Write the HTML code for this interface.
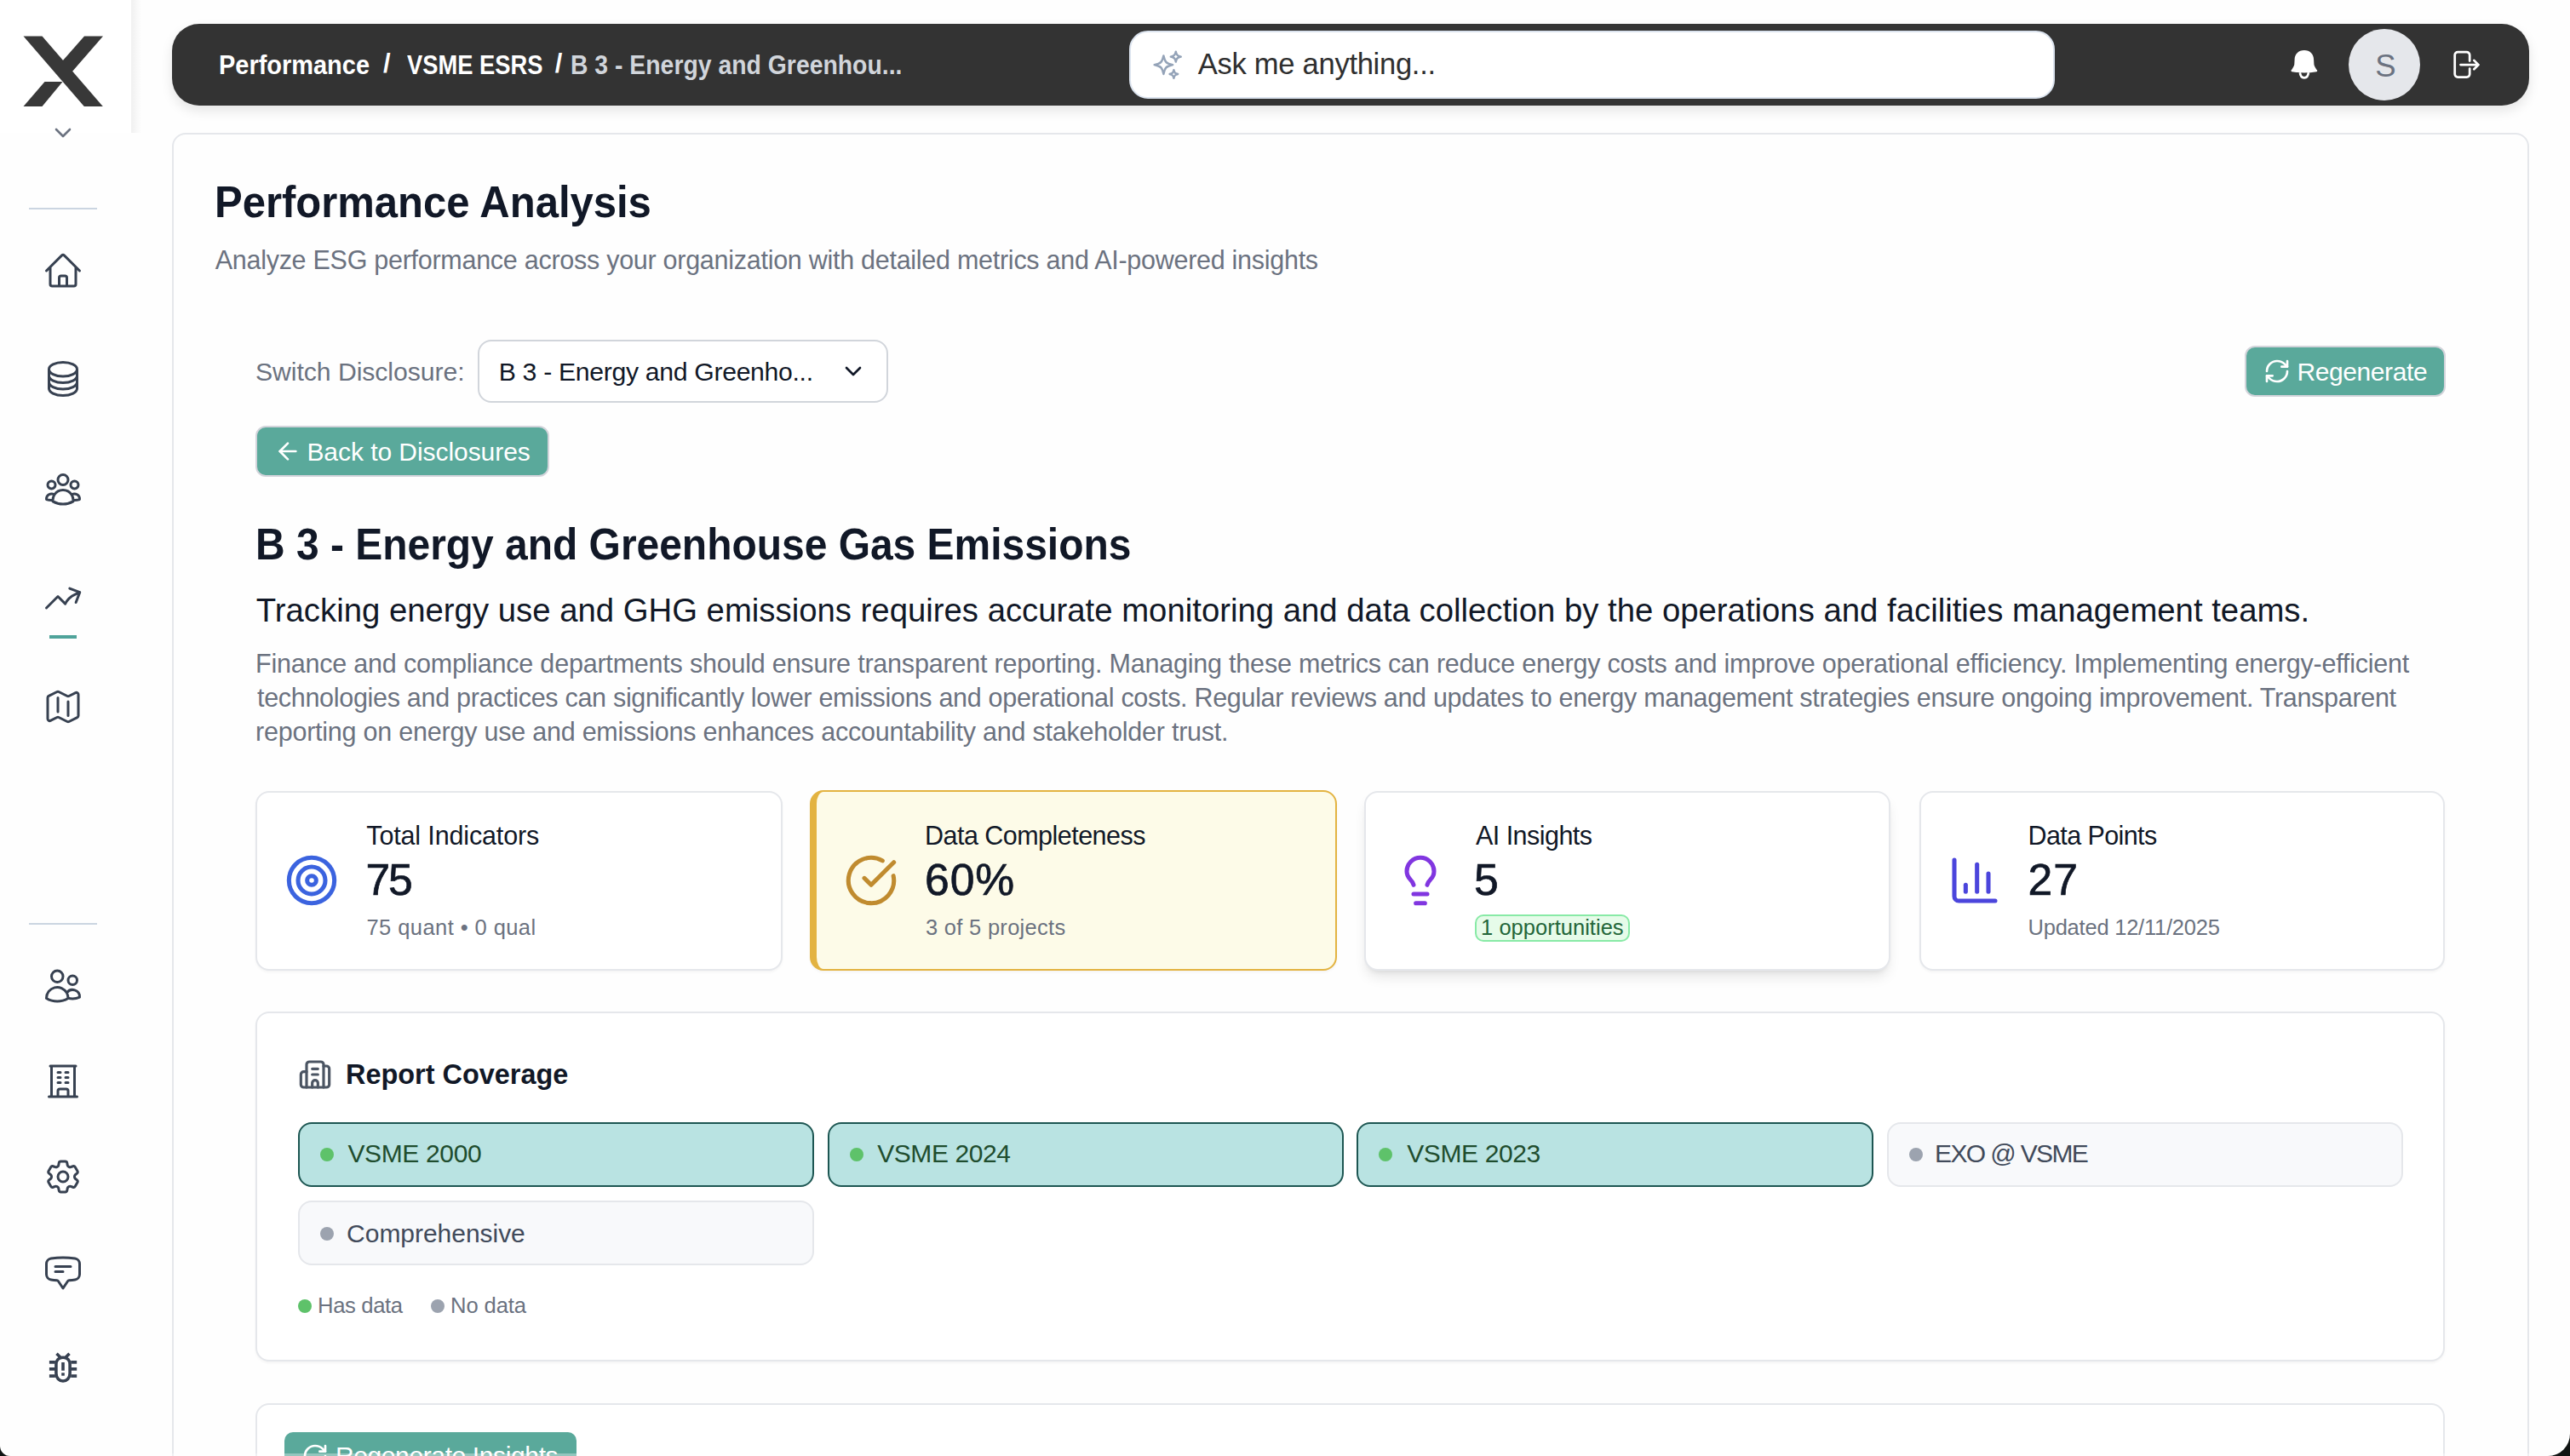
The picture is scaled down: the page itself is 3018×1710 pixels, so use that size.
<!DOCTYPE html>
<html><head><meta charset="utf-8">
<style>
html,body{margin:0;padding:0;}
html{background:#101413;}
body{width:3018px;height:1710px;position:relative;overflow:hidden;background:#fefefe;border-radius:0 0 26px 12px;font-family:"Liberation Sans",sans-serif;}
.a{position:absolute;}
.t{position:absolute;line-height:1;white-space:nowrap;}
.b{font-weight:bold;}
svg{position:absolute;overflow:visible;}
@media (max-width: 2000px){html{zoom:0.5;}}
</style></head>
<body>
<!-- sidebar top logo block -->
<div class="a" style="left:0;top:0;width:154px;height:156px;background:#ffffff;"></div>
<div class="a" style="left:154px;top:0;width:12px;height:156px;background:linear-gradient(to right, rgba(0,0,0,0.055), rgba(0,0,0,0));"></div>
<svg style="left:0;top:0" width="160" height="160" viewBox="0 0 160 160">
  <polygon fill="#383838" points="27.5,42.6 49.5,42.6 120.8,125 98.8,125"/>
  <polygon fill="#383838" points="99,42.6 121,42.6 84,85 73,72"/>
  <polygon fill="#383838" points="52.5,96 73.5,96 49.5,125 27.5,125"/>
  <polyline fill="none" stroke="#6b7280" stroke-width="2.6" stroke-linecap="round" stroke-linejoin="round" points="66,152 74,160 82,152"/>
</svg>

<!-- sidebar separator & icons -->
<div class="a" style="left:34px;top:243.5px;width:80px;height:2px;background:#cbd5e1;"></div>
<div class="a" style="left:34px;top:1083.5px;width:80px;height:2px;background:#cbd5e1;"></div>
<div class="a" style="left:58px;top:746px;width:32px;height:4px;background:#4fa39a;"></div>

<!-- top bar -->
<div class="a" style="left:202px;top:28px;width:2768px;height:96px;background:#333333;border-radius:32px;box-shadow:0 6px 14px rgba(0,0,0,0.10);"></div>
<div class="t b" id="bc1" style="left:256.90px;top:61.52px;font-size:30.8px;color:#ffffff;letter-spacing:0px;transform:scaleX(0.9401);transform-origin:0 0;">Performance</div>
<div class="t b" id="bc2" style="left:449.90px;top:60.12px;font-size:30.8px;color:#ffffff;letter-spacing:0.000px;">/</div>
<div class="t b" id="bc3" style="left:477.60px;top:61.52px;font-size:30.8px;color:#ffffff;letter-spacing:0px;transform:scaleX(0.8868);transform-origin:0 0;">VSME ESRS</div>
<div class="t b" id="bc4" style="left:651.80px;top:60.12px;font-size:30.8px;color:#ffffff;letter-spacing:0.000px;">/</div>
<div class="t b" id="bc5" style="left:670.40px;top:61.52px;font-size:30.8px;color:#d1d5db;letter-spacing:0px;transform:scaleX(0.9213);transform-origin:0 0;">B 3 - Energy and Greenhou...</div>
<!-- search -->
<div class="a" style="left:1326px;top:36px;width:1087px;height:80px;box-sizing:border-box;background:#fff;border:2px solid #dbe3ee;border-radius:22px;"></div>
<div class="t" id="search" style="left:1406.80px;top:57.70px;font-size:34.6px;color:#2f2f2f;letter-spacing:-0.306px;">Ask me anything...</div>
<!-- avatar -->
<div class="a" style="left:2758px;top:34px;width:84px;height:84px;border-radius:50%;background:#e5e7eb;"></div>
<div class="t" id="av" style="left:2789.30px;top:59.60px;font-size:36.5px;color:#6b7280;letter-spacing:0.000px;">S</div>

<!-- main card -->
<div class="a" style="left:202px;top:156px;width:2768px;height:1600px;box-sizing:border-box;border:2px solid #e5e7eb;border-radius:16px;background:#fefefe;"></div>

<svg style="left:50px;top:293.7px" width="48" height="48" viewBox="0 0 24 24" fill="none" stroke="#374151" stroke-width="1.5" stroke-linecap="round" stroke-linejoin="round"><path d="M2.25 12l8.954-8.955c.44-.439 1.152-.439 1.591 0L21.75 12M4.5 9.75v10.125c0 .621.504 1.125 1.125 1.125H9.75v-4.875c0-.621.504-1.125 1.125-1.125h2.25c.621 0 1.125.504 1.125 1.125V21h4.125c.621 0 1.125-.504 1.125-1.125V9.75M8.25 21h8.25"/></svg>
<svg style="left:50px;top:421.3px" width="48" height="48" viewBox="0 0 24 24" fill="none" stroke="#374151" stroke-width="1.5" stroke-linecap="round" stroke-linejoin="round"><path d="M20.25 6.375c0 2.278-3.694 4.125-8.25 4.125S3.75 8.653 3.75 6.375m16.5 0c0-2.278-3.694-4.125-8.25-4.125S3.75 4.097 3.75 6.375m16.5 0v11.25c0 2.278-3.694 4.125-8.25 4.125s-8.25-1.847-8.25-4.125V6.375m16.5 0v3.75m-16.5-3.75v3.75m16.5 0v3.75C20.25 16.153 16.556 18 12 18s-8.25-1.847-8.25-4.125v-3.75m16.5 0c0 2.278-3.694 4.125-8.25 4.125s-8.25-1.847-8.25-4.125"/></svg>
<svg style="left:50px;top:550.2px" width="48" height="48" viewBox="0 0 24 24" fill="none" stroke="#374151" stroke-width="1.5" stroke-linecap="round" stroke-linejoin="round"><path d="M18 18.72a9.094 9.094 0 003.741-.479 3 3 0 00-4.682-2.72m.94 3.198l.001.031c0 .225-.012.447-.037.666A11.944 11.944 0 0112 21c-2.17 0-4.207-.576-5.963-1.584A6.062 6.062 0 016 18.719m12 0a5.971 5.971 0 00-.941-3.197m0 0A5.995 5.995 0 0012 12.75a5.995 5.995 0 00-5.058 2.772m0 0a3 3 0 00-4.681 2.72 8.986 8.986 0 003.74.477m.94-3.197a5.971 5.971 0 00-.94 3.197M15 6.75a3 3 0 11-6 0 3 3 0 016 0zm6 3a2.25 2.25 0 11-4.5 0 2.25 2.25 0 014.5 0zm-13.5 0a2.25 2.25 0 11-4.5 0 2.25 2.25 0 014.5 0z"/></svg>
<svg style="left:50px;top:677.7px" width="48" height="48" viewBox="0 0 24 24" fill="none" stroke="#374151" stroke-width="1.5" stroke-linecap="round" stroke-linejoin="round"><path d="M2.25 18L9 11.25l4.306 4.307a11.95 11.95 0 015.814-5.519l2.74-1.22m0 0l-5.94-2.28m5.94 2.28l-2.28 5.941"/></svg>
<svg style="left:50px;top:806px" width="48" height="48" viewBox="0 0 24 24" fill="none" stroke="#374151" stroke-width="1.5" stroke-linecap="round" stroke-linejoin="round"><path d="M9 6.75V15m6-6v8.25m.503 3.498l4.875-2.437c.381-.19.622-.58.622-1.006V4.82c0-.836-.88-1.38-1.628-1.006l-3.869 1.934c-.317.159-.69.159-1.006 0L9.503 3.252a1.125 1.125 0 00-1.006 0L3.622 5.689C3.24 5.88 3 6.27 3 6.695V19.18c0 .836.88 1.38 1.628 1.006l3.869-1.934c.317-.159.69-.159 1.006 0l4.994 2.497c.317.158.69.158 1.006 0z"/></svg>
<svg style="left:50px;top:1133.5px" width="48" height="48" viewBox="0 0 24 24" fill="none" stroke="#374151" stroke-width="1.5" stroke-linecap="round" stroke-linejoin="round"><path d="M15 19.128a9.38 9.38 0 002.625.372 9.337 9.337 0 004.121-.952 4.125 4.125 0 00-7.533-2.493M15 19.128v-.003c0-1.113-.285-2.16-.786-3.07M15 19.128v.106A12.318 12.318 0 018.624 21c-2.331 0-4.512-.645-6.374-1.766l-.001-.109a6.375 6.375 0 0111.964-3.07M12 6.375a3.375 3.375 0 11-6.75 0 3.375 3.375 0 016.75 0zm8.25 2.25a2.625 2.625 0 11-5.25 0 2.625 2.625 0 015.25 0z"/></svg>
<svg style="left:50px;top:1245.5px" width="48" height="48" viewBox="0 0 24 24" fill="none" stroke="#374151" stroke-width="1.5" stroke-linecap="round" stroke-linejoin="round"><path d="M3.75 21h16.5M4.5 3h15M5.25 3v18m13.5-18v18M9 6.75h1.5m-1.5 3h1.5m-1.5 3h1.5m3-6H15m-1.5 3H15m-1.5 3H15M9 21v-3.375c0-.621.504-1.125 1.125-1.125h3.75c.621 0 1.125.504 1.125 1.125V21"/></svg>
<svg style="left:50px;top:1358px" width="48" height="48" viewBox="0 0 24 24" fill="none" stroke="#374151" stroke-width="1.5" stroke-linecap="round" stroke-linejoin="round"><path d="M9.594 3.94c.09-.542.56-.94 1.11-.94h2.593c.55 0 1.02.398 1.11.94l.213 1.281c.063.374.313.686.645.87.074.04.147.083.22.127.324.196.72.257 1.075.124l1.217-.456a1.125 1.125 0 011.37.49l1.296 2.247a1.125 1.125 0 01-.26 1.431l-1.003.827c-.293.24-.438.613-.431.992a6.759 6.759 0 010 .255c-.007.378.138.75.43.99l1.005.828c.424.35.534.954.26 1.43l-1.298 2.247a1.125 1.125 0 01-1.369.491l-1.217-.456c-.355-.133-.75-.072-1.076.124a6.57 6.57 0 01-.22.128c-.331.183-.581.495-.644.869l-.213 1.28c-.09.543-.56.941-1.11.941h-2.594c-.55 0-1.02-.398-1.11-.94l-.213-1.281c-.062-.374-.312-.686-.644-.87a6.52 6.52 0 01-.22-.127c-.325-.196-.72-.257-1.076-.124l-1.217.456a1.125 1.125 0 01-1.369-.49l-1.297-2.247a1.125 1.125 0 01.26-1.431l1.004-.827c.292-.24.437-.613.43-.992a6.932 6.932 0 010-.255c.007-.378-.138-.75-.43-.99l-1.004-.828a1.125 1.125 0 01-.26-1.43l1.297-2.247a1.125 1.125 0 011.37-.491l1.216.456c.356.133.751.072 1.076-.124.072-.044.146-.087.22-.128.332-.183.582-.495.644-.869l.214-1.281zM15 12a3 3 0 11-6 0 3 3 0 016 0z"/></svg>
<svg style="left:50px;top:1470.5px" width="48" height="48" viewBox="0 0 24 24" fill="none" stroke="#374151" stroke-width="1.5" stroke-linecap="round" stroke-linejoin="round"><path d="M7.5 8.25h9m-9 3H12m-9.75 1.51c0 1.6 1.123 2.994 2.707 3.227 1.129.166 2.27.293 3.423.379.35.026.67.21.865.501L12 21l2.755-4.133a1.14 1.14 0 01.865-.501 48.172 48.172 0 003.423-.379c1.584-.233 2.707-1.626 2.707-3.228V6.741c0-1.602-1.123-2.995-2.707-3.228A48.394 48.394 0 0012 3c-2.392 0-4.744.175-7.043.513C3.373 3.746 2.25 5.14 2.25 6.741v6.018z"/></svg>
<svg style="left:0;top:0" width="1" height="1"><g fill="#374151">
<rect x="57.9" y="1598" width="7" height="3.7"/><rect x="57.9" y="1606" width="7" height="3.7"/><rect x="57.9" y="1614.2" width="7" height="3.7"/>
<rect x="83.2" y="1598" width="7" height="3.7"/><rect x="83.2" y="1606" width="7" height="3.7"/><rect x="83.2" y="1614.2" width="7" height="3.7"/>
<rect x="72.2" y="1600" width="3.6" height="9.7"/><rect x="72.2" y="1612.3" width="3.6" height="3.4"/>
</g><g fill="none" stroke="#374151" stroke-width="3.6">
<path d="M74 1594.2 C69 1594.2 65.9 1597.8 65.9 1602.5 V1613 C65.9 1618.5 69.5 1622 74 1622 C78.5 1622 82.1 1618.5 82.1 1613 V1602.5 C82.1 1597.8 79 1594.2 74 1594.2 Z"/>
<path d="M66.5 1589.8 L71 1594.3 M81.5 1589.8 L77 1594.3"/>
</g></svg>
<svg style="left:1351.8px;top:56.8px" width="38.4" height="38.4" viewBox="0 0 24 24" fill="none" stroke="#94a3b8" stroke-width="1.5" stroke-linecap="round" stroke-linejoin="round"><path d="M9.813 15.904L9 18.75l-.813-2.846a4.5 4.5 0 00-3.09-3.09L2.25 12l2.846-.813a4.5 4.5 0 003.09-3.09L9 5.25l.813 2.846a4.5 4.5 0 003.09 3.09L15.75 12l-2.846.813a4.5 4.5 0 00-3.09 3.09zM18.259 8.715L18 9.75l-.259-1.035a3.375 3.375 0 00-2.455-2.456L14.25 6l1.036-.259a3.375 3.375 0 002.455-2.456L18 2.25l.259 1.035a3.375 3.375 0 002.456 2.456L21.75 6l-1.035.259a3.375 3.375 0 00-2.456 2.456zM16.894 20.567L16.5 21.75l-.394-1.183a2.25 2.25 0 00-1.423-1.423L13.5 18.75l1.183-.394a2.25 2.25 0 001.423-1.423l.394-1.183.394 1.183a2.25 2.25 0 001.423 1.423l1.183.394-1.183.394a2.25 2.25 0 00-1.423 1.423z"/></svg>
<svg style="left:2680px;top:50px" width="50" height="50" viewBox="0 0 50 50"><path fill="#fff" d="M25.9 9.1 C19 9.1 14.6 14 14.6 20 L14.3 25.5 C14 28 11.5 31.5 10.6 32.6 C10.2 33.4 10.8 34 11.5 34.2 C16 35 21 35.4 25.9 35.4 C30.8 35.4 35.8 35 40.3 34.2 C41 34 41.5 33.4 41.1 32.6 C40.2 31.5 37.7 28 37.4 25.5 L37.1 20 C37.1 14 32.8 9.1 25.9 9.1 Z"/><path fill="none" stroke="#fff" stroke-width="2.7" d="M20.9 35.2 C21.2 38.8 23.2 41.3 25.9 41.3 C28.6 41.3 30.6 38.8 30.9 35.2"/></svg>
<svg style="left:2870px;top:50px" width="50" height="50" viewBox="0 0 50 50" fill="none" stroke="#fff" stroke-width="2.75" stroke-linecap="round" stroke-linejoin="round"><path d="M30.2 21.5 V14.7 a3.5 3.5 0 0 0 -3.5 -3.5 H16.2 a3.5 3.5 0 0 0 -3.5 3.5 V37 a3.5 3.5 0 0 0 3.5 3.5 H26.7 a3.5 3.5 0 0 0 3.5 -3.5 V30.5 M19.5 26.1 H40.5 M35.3 20.9 L40.5 26.1 L35.3 31.3"/></svg>
<!-- header -->
<div class="t b" id="title" style="left:252.00px;top:211.66px;font-size:51.9px;color:#111827;letter-spacing:0px;transform:scaleX(0.9442);transform-origin:0 0;">Performance Analysis</div>
<div class="t" id="subtitle" style="left:252.70px;top:290.28px;font-size:30.5px;color:#6b7280;letter-spacing:-0.271px;">Analyze ESG performance across your organization with detailed metrics and AI-powered insights</div>

<div class="t" id="switch" style="left:300.00px;top:421.53px;font-size:30.2px;color:#6b7280;letter-spacing:-0.059px;">Switch Disclosure:</div>
<div class="a" style="left:561px;top:399px;width:482px;height:74px;box-sizing:border-box;background:#fff;border:2px solid #d1d5db;border-radius:16px;"></div>
<div class="t" id="seltext" style="left:585.70px;top:421.53px;font-size:30.2px;color:#111827;letter-spacing:-0.315px;">B 3 - Energy and Greenho...</div>
<svg style="left:985.8px;top:420.25px" width="32" height="32" viewBox="0 0 24 24" fill="none" stroke="#111827" stroke-width="2" stroke-linecap="round" stroke-linejoin="round"><path d="m6 9 6 6 6-6"/></svg>


<div class="a" style="left:2636px;top:406px;width:236px;height:60px;box-sizing:border-box;background:#5aa99b;border:2px solid #d3d4db;border-radius:12px;"></div>
<div class="t" id="regen" style="left:2697.40px;top:421.50px;font-size:30px;color:#fff;letter-spacing:-0.400px;">Regenerate</div>

<div class="a" style="left:300px;top:500px;width:345px;height:60px;box-sizing:border-box;background:#5aa99b;border:2px solid #d3d4db;border-radius:12px;"></div>
<div class="t" id="back" style="left:360.40px;top:515.80px;font-size:30px;color:#fff;letter-spacing:-0.056px;">Back to Disclosures</div>

<div class="t b" id="h3" style="left:300.00px;top:613.91px;font-size:51.6px;color:#111827;letter-spacing:0px;transform:scaleX(0.9292);transform-origin:0 0;">B 3 - Energy and Greenhouse Gas Emissions</div>
<div class="t" id="track" style="left:300.80px;top:697.87px;font-size:38.3px;color:#111827;letter-spacing:0.007px;">Tracking energy use and GHG emissions requires accurate monitoring and data collection by the operations and facilities management teams.</div>
<div class="t" id="p1" style="left:300.00px;top:764.18px;font-size:30.5px;color:#6b7280;letter-spacing:-0.205px;">Finance and compliance departments should ensure transparent reporting. Managing these metrics can reduce energy costs and improve operational efficiency. Implementing energy-efficient</div>
<div class="t" id="p2" style="left:302.00px;top:804.08px;font-size:30.5px;color:#6b7280;letter-spacing:-0.301px;">technologies and practices can significantly lower emissions and operational costs. Regular reviews and updates to energy management strategies ensure ongoing improvement. Transparent</div>
<div class="t" id="p3" style="left:300.00px;top:843.78px;font-size:30.5px;color:#6b7280;letter-spacing:-0.227px;">reporting on energy use and emissions enhances accountability and stakeholder trust.</div>

<!-- stat cards -->
<div class="a" style="left:300px;top:929px;width:619px;height:211px;box-sizing:border-box;background:#fff;border:2px solid #e5e7eb;border-radius:16px;box-shadow:0 2px 3px rgba(0,0,0,0.04);"></div>
<div class="a" style="left:951px;top:928px;width:619px;height:212px;box-sizing:border-box;background:#fdfbe8;border:2px solid #e3b341;border-left-width:8px;border-radius:16px;box-shadow:0 2px 3px rgba(0,0,0,0.04);"></div>
<div class="a" style="left:1602px;top:929px;width:618px;height:211px;box-sizing:border-box;background:#fff;border:2px solid #e5e7eb;border-radius:16px;box-shadow:0 10px 15px -3px rgba(0,0,0,0.1), 0 4px 6px -4px rgba(0,0,0,0.1);"></div>
<div class="a" style="left:2254px;top:929px;width:617px;height:211px;box-sizing:border-box;background:#fff;border:2px solid #e5e7eb;border-radius:16px;box-shadow:0 2px 3px rgba(0,0,0,0.04);"></div>

<div class="t" id="c1t" style="left:430.30px;top:966.28px;font-size:30.5px;color:#111827;letter-spacing:-0.147px;">Total Indicators</div>
<div class="t" id="c1n" style="-webkit-text-stroke:0.7px #111827;left:429.60px;top:1008.13px;font-size:51.7px;color:#111827;letter-spacing:-2.400px;">75</div>
<div class="t" id="c1s" style="left:430.50px;top:1077.01px;font-size:25.5px;color:#6b7280;letter-spacing:0.425px;">75 quant &#8226; 0 qual</div>

<div class="t" id="c2t" style="left:1086.00px;top:966.28px;font-size:30.5px;color:#111827;letter-spacing:-0.525px;">Data Completeness</div>
<div class="t" id="c2n" style="-webkit-text-stroke:0.7px #111827;left:1086.00px;top:1008.13px;font-size:51.7px;color:#111827;letter-spacing:0.900px;">60%</div>
<div class="t" id="c2s" style="left:1087.00px;top:1077.01px;font-size:25.5px;color:#6b7280;letter-spacing:0.286px;">3 of 5 projects</div>

<div class="t" id="c3t" style="left:1733.00px;top:966.28px;font-size:30.5px;color:#111827;letter-spacing:-0.540px;">AI Insights</div>
<div class="t" id="c3n" style="-webkit-text-stroke:0.7px #111827;left:1731.00px;top:1008.13px;font-size:51.7px;color:#111827;letter-spacing:0.000px;">5</div>
<div class="a" style="left:1732px;top:1074px;width:182px;height:32px;box-sizing:border-box;background:#e6fbe9;border:2px solid #88eaa6;border-radius:10px;"></div>
<div class="t" id="c3s" style="left:1739.10px;top:1077.01px;font-size:25.5px;color:#23663a;letter-spacing:0.014px;">1 opportunities</div>

<div class="t" id="c4t" style="left:2381.50px;top:966.28px;font-size:30.5px;color:#111827;letter-spacing:-0.600px;">Data Points</div>
<div class="t" id="c4n" style="-webkit-text-stroke:0.7px #111827;left:2381.50px;top:1008.13px;font-size:51.7px;color:#111827;letter-spacing:1.000px;">27</div>
<div class="t" id="c4s" style="left:2381.50px;top:1077.01px;font-size:25.5px;color:#6b7280;letter-spacing:-0.224px;">Updated 12/11/2025</div>

<!-- report coverage -->
<div class="a" style="left:300px;top:1188px;width:2571px;height:411px;box-sizing:border-box;background:#fff;border:2px solid #e5e7eb;border-radius:16px;box-shadow:0 2px 3px rgba(0,0,0,0.04);"></div>
<div class="t b" id="rc" style="left:406.00px;top:1244.70px;font-size:33.9px;color:#111827;letter-spacing:0px;transform:scaleX(0.9571);transform-origin:0 0;">Report Coverage</div>

<div class="a" style="left:350px;top:1318px;width:606px;height:76px;box-sizing:border-box;background:#b9e3e2;border:2px solid #1d5652;border-radius:16px;"></div>
<div class="a" style="left:972px;top:1318px;width:606px;height:76px;box-sizing:border-box;background:#b9e3e2;border:2px solid #1d5652;border-radius:16px;"></div>
<div class="a" style="left:1593px;top:1318px;width:607px;height:76px;box-sizing:border-box;background:#b9e3e2;border:2px solid #1d5652;border-radius:16px;"></div>
<div class="a" style="left:2216px;top:1318px;width:606px;height:76px;box-sizing:border-box;background:#f8f9fb;border:2px solid #e5e7eb;border-radius:16px;"></div>
<div class="a" style="left:350px;top:1410px;width:606px;height:76px;box-sizing:border-box;background:#f8f9fb;border:2px solid #e5e7eb;border-radius:16px;"></div>

<div class="a" style="left:376px;top:1348px;width:16px;height:16px;border-radius:50%;background:#5ec26a;"></div>
<div class="a" style="left:998px;top:1348px;width:16px;height:16px;border-radius:50%;background:#5ec26a;"></div>
<div class="a" style="left:1619px;top:1348px;width:16px;height:16px;border-radius:50%;background:#5ec26a;"></div>
<div class="a" style="left:2242px;top:1348px;width:16px;height:16px;border-radius:50%;background:#9ca3af;"></div>
<div class="a" style="left:376px;top:1441px;width:16px;height:16px;border-radius:50%;background:#9ca3af;"></div>

<div class="t" id="ch1" style="left:408.40px;top:1340.40px;font-size:30px;color:#1f4d2e;letter-spacing:-0.350px;">VSME 2000</div>
<div class="t" id="ch2" style="left:1030.20px;top:1340.40px;font-size:30px;color:#1f4d2e;letter-spacing:-0.425px;">VSME 2024</div>
<div class="t" id="ch3" style="left:1652.20px;top:1340.40px;font-size:30px;color:#1f4d2e;letter-spacing:-0.375px;">VSME 2023</div>
<div class="t" id="ch4" style="left:2272.10px;top:1340.40px;font-size:30px;color:#414a5a;letter-spacing:-1.644px;">EXO @ VSME</div>
<div class="t" id="ch5" style="left:407.10px;top:1433.80px;font-size:30px;color:#414a5a;letter-spacing:-0.033px;">Comprehensive</div>

<div class="a" style="left:350px;top:1526px;width:16px;height:16px;border-radius:50%;background:#5ec26a;"></div>
<div class="t" id="lg1" style="left:373.00px;top:1521.02px;font-size:25.6px;color:#6b7280;letter-spacing:-0.343px;">Has data</div>
<div class="a" style="left:506px;top:1526px;width:16px;height:16px;border-radius:50%;background:#9ca3af;"></div>
<div class="t" id="lg2" style="left:529.00px;top:1521.02px;font-size:25.6px;color:#6b7280;letter-spacing:-0.100px;">No data</div>

<!-- bottom card -->
<div class="a" style="left:300px;top:1648px;width:2571px;height:200px;box-sizing:border-box;background:#fff;border:2px solid #e5e7eb;border-radius:16px;"></div>
<div class="a" style="left:334px;top:1682px;width:343px;height:80px;background:#5aa99b;border-radius:10px;"></div>
<div class="t" id="rgi" style="left:393.90px;top:1694.60px;font-size:30px;color:#fff;letter-spacing:-0.378px;">Regenerate Insights</div>
<svg style="left:334.4px;top:1002.4px" width="64" height="64" viewBox="0 0 24 24" fill="none" stroke="#3b63df" stroke-width="1.9" stroke-linecap="round" stroke-linejoin="round"><circle cx="12" cy="12" r="10"/><circle cx="12" cy="12" r="6"/><circle cx="12" cy="12" r="2"/></svg>
<svg style="left:991.2px;top:1002.3px" width="64" height="64" viewBox="0 0 24 24" fill="none" stroke="#c08b2f" stroke-width="1.9" stroke-linecap="round" stroke-linejoin="round"><path d="M21.801 10A10 10 0 1 1 17 3.335"/><path d="m9 11 3 3L22 4"/></svg>
<svg style="left:1636.2px;top:1002.3px" width="64" height="64" viewBox="0 0 24 24" fill="none" stroke="#8136e0" stroke-width="1.9" stroke-linecap="round" stroke-linejoin="round"><path d="M15 14c.2-1 .7-1.7 1.5-2.5 1-.9 1.5-2.2 1.5-3.5A6 6 0 0 0 6 8c0 1 .2 2.2 1.5 3.5.7.7 1.3 1.5 1.5 2.5"/><path d="M9 18h6"/><path d="M10 22h4"/></svg>
<svg style="left:2286.8px;top:1001.7px" width="64" height="64" viewBox="0 0 24 24" fill="none" stroke="#4b45dc" stroke-width="1.9" stroke-linecap="round" stroke-linejoin="round"><path d="M3 3v16a2 2 0 0 0 2 2h16"/><path d="M18 17V9"/><path d="M13 17V5"/><path d="M8 17v-3"/></svg>
<svg style="left:350.1px;top:1241.9px" width="40" height="40" viewBox="0 0 24 24" fill="none" stroke="#4b5563" stroke-width="1.9" stroke-linecap="round" stroke-linejoin="round"><path d="M6 21V5a2 2 0 0 1 2-2h8a2 2 0 0 1 2 2v16"/><path d="M6 10H4a2 2 0 0 0-2 2v7a2 2 0 0 0 2 2h16a2 2 0 0 0 2-2V8a2 2 0 0 0-2-2h-2"/><path d="M10 8h4M10 12h4"/><path d="M10 21v-3a2 2 0 0 1 4 0v3"/></svg>
<svg style="left:2658px;top:420px" width="32" height="32" viewBox="0 0 24 24" fill="none" stroke="#fff" stroke-width="2" stroke-linecap="round" stroke-linejoin="round"><path d="M3 12a9 9 0 0 1 9-9 9.75 9.75 0 0 1 6.74 2.74L21 8"/><path d="M21 3v5h-5"/><path d="M21 12a9 9 0 0 1-9 9 9.75 9.75 0 0 1-6.74-2.74L3 16"/><path d="M8 16H3v5"/></svg>
<svg style="left:322px;top:514.3px" width="32" height="32" viewBox="0 0 24 24" fill="none" stroke="#fff" stroke-width="2" stroke-linecap="round" stroke-linejoin="round"><path d="m12 19-7-7 7-7"/><path d="M19 12H5"/></svg>
<svg style="left:354px;top:1694px" width="32" height="32" viewBox="0 0 24 24" fill="none" stroke="#fff" stroke-width="2" stroke-linecap="round" stroke-linejoin="round"><path d="M3 12a9 9 0 0 1 9-9 9.75 9.75 0 0 1 6.74 2.74L21 8"/><path d="M21 3v5h-5"/><path d="M21 12a9 9 0 0 1-9 9 9.75 9.75 0 0 1-6.74-2.74L3 16"/><path d="M8 16H3v5"/></svg>
<div class="a" style="left:0;top:1707px;width:3018px;height:3px;background:rgba(255,255,255,0.35);"></div>
</body></html>
